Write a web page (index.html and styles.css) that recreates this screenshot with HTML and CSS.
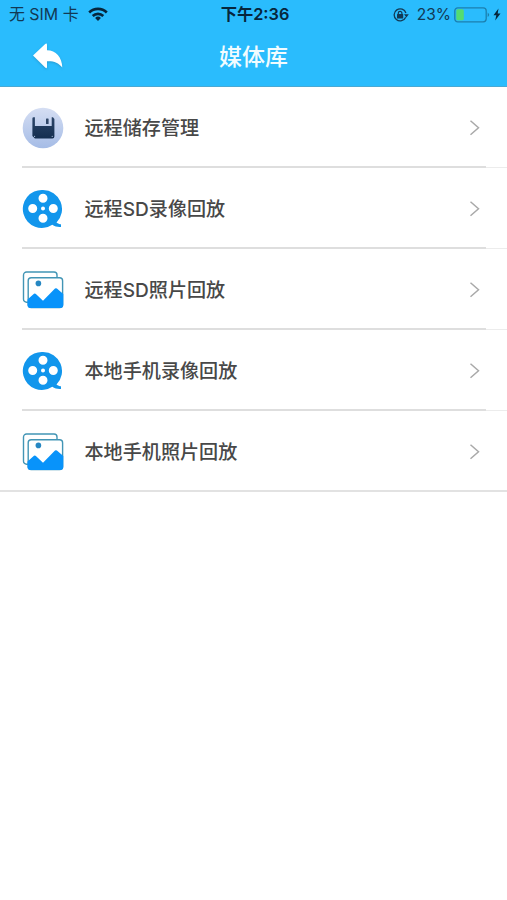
FILE: index.html
```html
<!DOCTYPE html>
<html lang="zh-CN">
<head>
<meta charset="utf-8">
<title>媒体库</title>
<link rel="stylesheet" href="styles.css">
</head>
<body>
<svg width="0" height="0" class="defs" aria-hidden="true">
  <symbol id="reel" viewBox="0 0 42 42">
    <path fill="#1296ec" fill-rule="evenodd" d="M21 2a19 19 0 0 1 13.500 32.400c1.500 1.300 3 1.700 4.500 1.900v2.700c-3.200.3-6.200-.5-8.700-2.200A19 19 0 1 1 21 2zM21 5.700a4.500 4.500 0 1 0 0 9a4.500 4.500 0 1 0 0-9zM21 25.800a4.500 4.500 0 1 0 0 9a4.500 4.500 0 1 0 0-9zM10.700 16a4.500 4.500 0 1 0 0 9a4.500 4.500 0 1 0 0-9zM31.300 16a4.500 4.500 0 1 0 0 9a4.500 4.500 0 1 0 0-9zM21 18.600a2 2 0 1 0 0 4a2 2 0 1 0 0-4z"/>
  </symbol>
  <symbol id="photos" viewBox="0 0 42 42">
    <path fill="none" stroke="#4295b5" stroke-width="1.400" d="M6 33.200H4.500a3 3 0 0 1-3-3V6a3 3 0 0 1 3-3H32a3 3 0 0 1 3 3V8"/>
    <rect x="6.200" y="8.700" width="34.400" height="29.800" rx="3" fill="#fff" stroke="#4295b5" stroke-width="1.400"/>
    <circle cx="16.400" cy="14.400" r="2.800" fill="#2687c2"/>
    <path fill="#0893fa" d="M5.500 30.500L12 24.800q1-.8 1.900.1L21 31.700 33 19.600q1-.8 1.900 0L41.300 25V36a3 3 0 0 1-3 3H8.500a3 3 0 0 1-3-3z"/>
  </symbol>
  <symbol id="chevron" viewBox="0 0 12 18">
    <path fill="none" stroke="#a9a9a9" stroke-width="1.500" d="M1.500 1.800l8 7-8 7"/>
  </symbol>
</svg>
<header class="header">
  <div class="status">
    <div class="carrier">
      <span>无 SIM 卡</span>
      <svg class="wifi" viewBox="0 0 20 15"><g fill="none" stroke="#06263c" stroke-width="2.600"><path d="M1.200 5.500a12.600 12.600 0 0 1 17.600 0"/><path d="M4.700 9a7.600 7.600 0 0 1 10.600 0"/></g><path fill="#06263c" d="M10 14L7.100 11a4.200 4.200 0 0 1 5.800 0z"/></svg>
    </div>
    <div class="time">下午2:36</div>
    <div class="power">
      <svg class="lock" viewBox="0 0 16 14"><path d="M12.700 9.200A6 6 0 1 1 12.900 5" fill="none" stroke="#123954" stroke-width="1.300"/><path d="M11 6.200h4.800l-2.400 3.200z" fill="#123954"/><rect x="4" y="6" width="6.200" height="4.600" rx=".5" fill="#123954"/><path d="M5.300 6.400V5.100a1.800 1.800 0 0 1 3.600 0v1.300" fill="none" stroke="#123954" stroke-width="1.200"/></svg>
      <span class="percent">23%</span>
      <svg class="battery" viewBox="0 0 37 16"><rect x=".8" y=".8" width="31.400" height="14" rx="3" fill="none" stroke="#1c7fae" stroke-width="1.300"/><rect x="2.300" y="2.300" width="7.500" height="11" rx="1.500" fill="#54dc71"/><path d="M33.700 5.500q3 2.300 0 4.600z" fill="#1c7fae"/></svg>
      <svg class="bolt" viewBox="0 0 8 13"><path d="M5.500.5L.5 7.200h2.800L2.200 12.500 7.500 5.400H4.700z" fill="#06263c"/></svg>
    </div>
  </div>
  <div class="nav">
    <svg class="back" viewBox="0 0 32 28"><path fill="#fff" d="M1 12.500L13.200 1q1.800-1.300 1.800 1V7.200C24 7.200 30 14 30.300 24.500c-4-5-8.800-6.700-15.300-6.300V24q0 2-1.800.5z"/></svg>
    <h1>媒体库</h1>
  </div>
</header>
<main class="list">
  <div class="row">
    <svg class="icon" viewBox="0 0 42 42"><defs><linearGradient id="disc" x1="0" y1="0" x2="0" y2="1"><stop stop-color="#d5def3"/><stop offset="1" stop-color="#a5bce6"/></linearGradient><linearGradient id="floppy" x1="0" y1="0" x2="0" y2="1"><stop stop-color="#2b4569"/><stop offset="1" stop-color="#142e50"/></linearGradient></defs><circle cx="21" cy="21" r="20.300" fill="url(#disc)"/><path fill="url(#floppy)" d="M11.600 10.200h1.300v8.900h16.800v-8.900h1.300l1.400 1.700v17.600q0 1.900-1.900 1.900H12.900L10.400 29V11.400q0-1.200 1.200-1.200z"/><rect x="24" y="11.400" width="2.600" height="5.600" rx=".6" fill="#304768"/><g fill="#b7c9e7"><circle cx="12.600" cy="29.300" r=".6"/><circle cx="30.200" cy="29.300" r=".6"/></g></svg>
    <span class="label">远程储存管理</span><svg class="chevron"><use href="#chevron"/></svg>
  </div>
  <div class="row">
    <svg class="icon"><use href="#reel"/></svg><span class="label">远程SD录像回放</span><svg class="chevron"><use href="#chevron"/></svg>
  </div>
  <div class="row">
    <svg class="icon"><use href="#photos"/></svg><span class="label">远程SD照片回放</span><svg class="chevron"><use href="#chevron"/></svg>
  </div>
  <div class="row">
    <svg class="icon"><use href="#reel"/></svg><span class="label">本地手机录像回放</span><svg class="chevron"><use href="#chevron"/></svg>
  </div>
  <div class="row">
    <svg class="icon"><use href="#photos"/></svg><span class="label">本地手机照片回放</span><svg class="chevron"><use href="#chevron"/></svg>
  </div>
</main>
</body>
</html>
```
FILE: styles.css
```css
* { box-sizing: border-box; }
body {
  margin: 0;
  min-height: 900px;
  background: #fff;
  font-family: Inter, "Noto Sans CJK SC", sans-serif;
  color: #484848;
}
svg { display: block; flex: none; }
.defs { position: absolute; }
.header {
  height: 87px;
  background: #2abcfd;
  border-bottom: 1px solid #4aa9d3;
}
.status {
  display: grid;
  grid-template-columns: 1fr auto 1fr;
  align-items: center;
  height: 29px;
  padding: 0 6px 0 9px;
  color: #123954;
  font-size: 16px;
  line-height: 29px;
  white-space: nowrap;
}
.carrier, .power { display: flex; align-items: center; }
.carrier { gap: 9px; font-size: 15.900px; }
.power { justify-content: flex-end; }
.wifi { width: 20px; height: 15px; }
.time { color: #06263c; font-size: 16.300px; font-weight: 600; }
.lock { width: 16px; height: 14px; margin-right: 8px; }
.percent { font-size: 15.500px; margin-right: 3px; }
.battery { width: 37px; height: 16px; margin-right: 2px; }
.bolt { width: 8px; height: 13px; }
.nav {
  display: grid;
  grid-template-columns: 1fr auto 1fr;
  align-items: center;
  height: 57px;
}
.back { width: 32px; height: 28px; margin: -2px 0 0 32px; filter: drop-shadow(0 1px 1px #247ca880); }
h1 { margin: 0; color: #f2fcff; font-size: 23px; line-height: 57px; font-weight: 500; }
.row {
  display: flex;
  align-items: center;
  height: 81px;
  padding: 0 26px 0 21.500px;
  background:
    linear-gradient(#dedede, #dedede) 22px 79px / 464px 2px no-repeat,
    linear-gradient(#ececec, #ececec) 486px 80px / 21px 1px no-repeat;
}
.row:last-child { background: linear-gradient(#e2e2e2, #e2e2e2) 0 79px / 100% 2px no-repeat; }
.icon { width: 42px; height: 42px; }
.label { flex: 1; margin-left: 21px; font-size: 19.100px; line-height: 28px; font-weight: 500; }
.chevron { width: 12px; height: 18px; }
```
